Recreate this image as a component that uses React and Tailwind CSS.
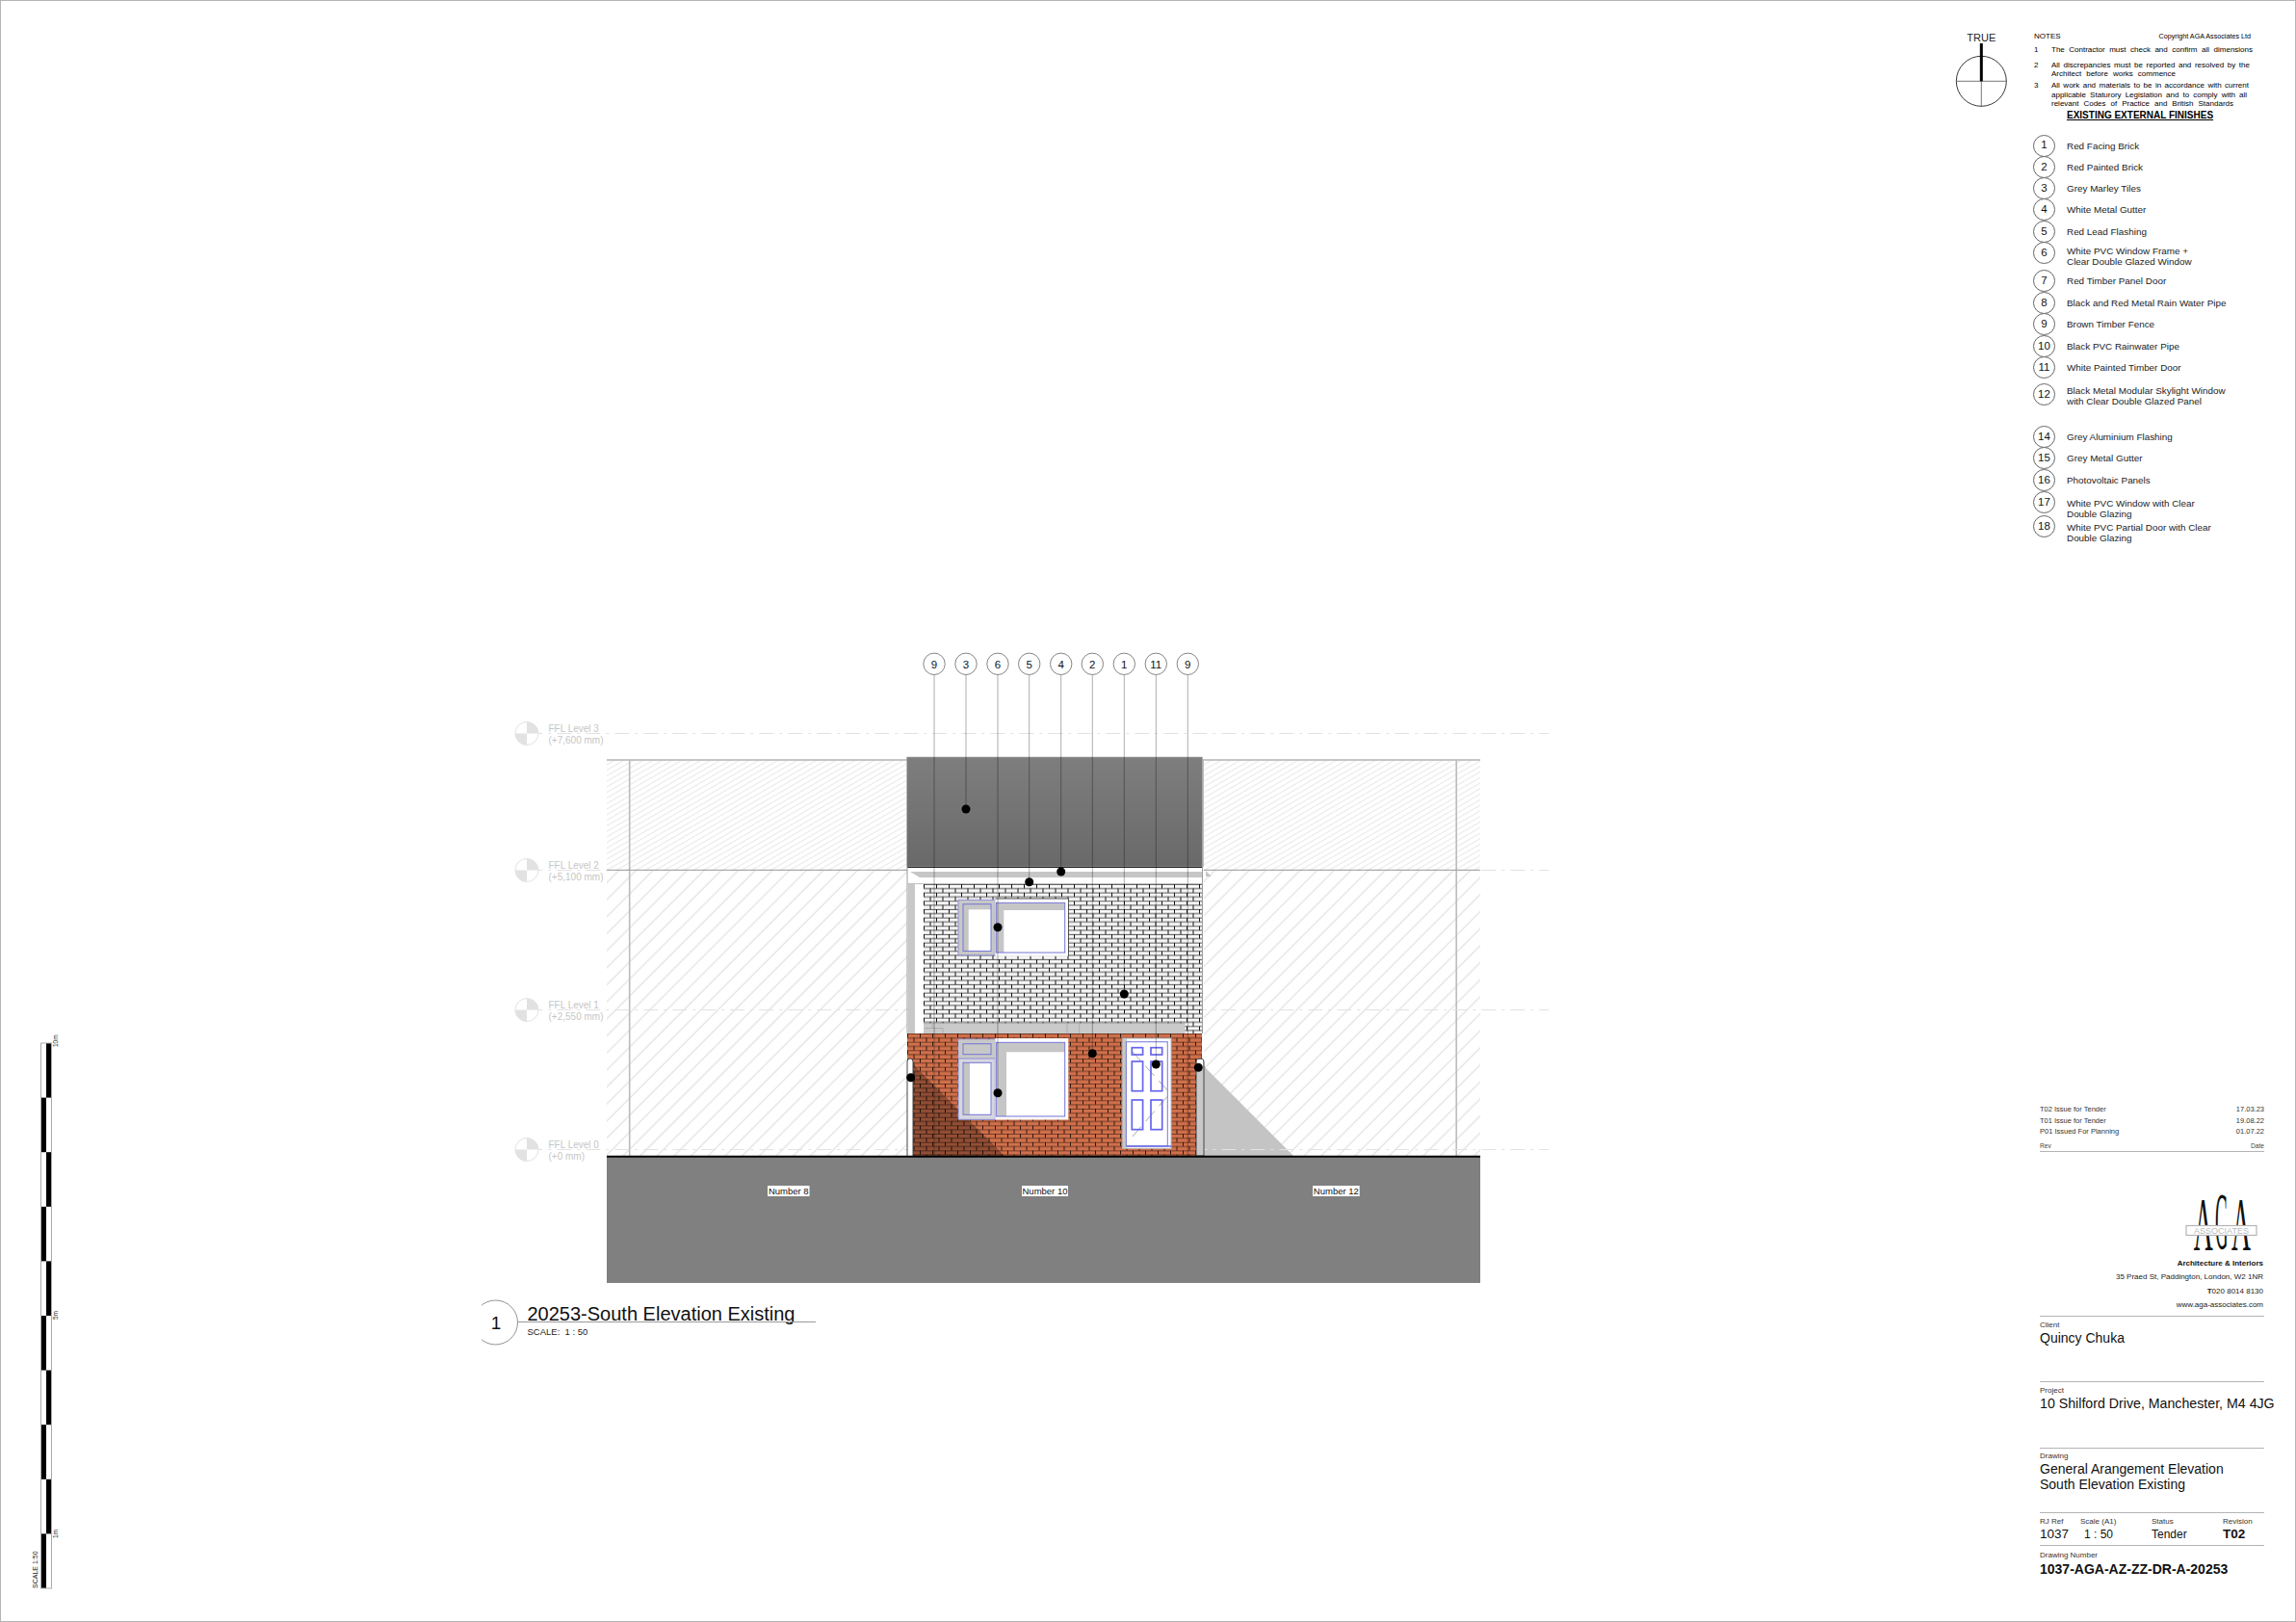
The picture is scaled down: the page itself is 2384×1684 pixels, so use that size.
const FONT = "font-['Liberation_Sans',Arial,sans-serif]"

// Finishes key, gap is the distance from the previous row, nudge lines two-line labels up with the reference
const finishes = [
  { no: '1', gap: 'mt-0', lines: ['Red Facing Brick'] },
  { no: '2', gap: 'mt-[0.3px]', lines: ['Red Painted Brick'] },
  { no: '3', gap: 'mt-[0.5px]', lines: ['Grey Marley Tiles'] },
  { no: '4', gap: 'mt-0', lines: ['White Metal Gutter'] },
  { no: '5', gap: 'mt-[1px]', lines: ['Red Lead Flashing'] },
  { no: '6', gap: 'mt-0', nudge: 'translate-y-[3px]', lines: ['White PVC Window Frame +', 'Clear Double Glazed Window'] },
  { no: '7', gap: 'mt-[7px]', lines: ['Red Timber Panel Door'] },
  { no: '8', gap: 'mt-[0.5px]', lines: ['Black and Red Metal Rain Water Pipe'] },
  { no: '9', gap: 'mt-[0.5px]', lines: ['Brown Timber Fence'] },
  { no: '10', gap: 'mt-[0.5px]', lines: ['Black PVC Rainwater Pipe'] },
  { no: '11', gap: 'mt-0', lines: ['White Painted Timber Door'] },
  { no: '12', gap: 'mt-[6px]', nudge: 'translate-y-[2px]', lines: ['Black Metal Modular Skylight Window', 'with Clear Double Glazed Panel'] },
  { no: '14', gap: 'mt-[22px]', lines: ['Grey Aluminium Flashing'] },
  { no: '15', gap: 'mt-[0.7px]', lines: ['Grey Metal Gutter'] },
  { no: '16', gap: 'mt-[0.3px]', lines: ['Photovoltaic Panels'] },
  { no: '17', gap: 'mt-[1.7px]', nudge: 'translate-y-[5.5px]', lines: ['White PVC Window with Clear', 'Double Glazing'] },
  { no: '18', gap: 'mt-[3px]', nudge: 'translate-y-[5.5px]', lines: ['White PVC Partial Door with Clear', 'Double Glazing'] },
]

const callouts = [
  { x: 970, label: '9', to: 1200, dots: [] },
  { x: 1003, label: '3', to: 840, dots: [840] },
  { x: 1036, label: '6', to: 1135, dots: [962.7, 1134.7] },
  { x: 1068.7, label: '5', to: 916, dots: [915.7] },
  { x: 1101.7, label: '4', to: 905, dots: [905] },
  { x: 1134.3, label: '2', to: 1094, dots: [1093.7] },
  { x: 1167.3, label: '1', to: 1032, dots: [1032] },
  { x: 1200.3, label: '11', to: 1105, dots: [1105] },
  { x: 1233.3, label: '9', to: 1200, dots: [] },
]

const levels = [
  { y: 761.5, name: 'FFL Level 3', height: '(+7,600 mm)' },
  { y: 903.5, name: 'FFL Level 2', height: '(+5,100 mm)' },
  { y: 1048.5, name: 'FFL Level 1', height: '(+2,550 mm)' },
  { y: 1193.5, name: 'FFL Level 0', height: '(+0 mm)' },
]

const doorPanels = [
  [1175.3, 1087.7, 11.3, 7.3], [1195, 1087.7, 11.7, 7.3],
  [1175.3, 1102, 11.3, 30.7], [1195, 1102, 11.7, 30.7],
  [1175.3, 1142, 11.3, 30.7], [1195, 1142, 11.7, 30.7],
]

function LevelMark({ y, name, height }) {
  return (
    <g>
      <circle cx="547" cy={y} r="12" fill="#fff" stroke="#e2e2e2" />
      <path d={`M547 ${y}V${y - 12}A12 12 0 0 1 559 ${y}Z`} fill="#e2e2e2" />
      <path d={`M547 ${y}V${y + 12}A12 12 0 0 1 535 ${y}Z`} fill="#e2e2e2" />
      <text x="569.5" y={y - 2} fontSize="10" fill="#c6c6c6">{name}</text>
      <text x="569.5" y={y + 10} fontSize="10" fill="#c6c6c6">{height}</text>
    </g>
  )
}

function Glazing({ x, y, w, h, sx = 0, sy = 0 }) {
  // blue pane outline, with the grey reveal shadow on the left and top
  return (
    <g>
      <rect x={x} y={y} width={w} height={h} fill="#c6c6c6" />
      <rect x={x + sx} y={y + sy} width={w - sx} height={h - sy} fill="#fff" />
      <rect x={x} y={y} width={w} height={h} fill="none" stroke="#7474d6" />
    </g>
  )
}

function Elevation() {
  return (
    <svg className="mt-[659px] shrink-0" width="1220" height="760" viewBox="500 660 1220 760" fontFamily="'Liberation Sans', Arial, sans-serif">
      <defs>
        <pattern id="hatchTight" width="10" height="5" patternUnits="userSpaceOnUse" patternTransform="rotate(-30)">
          <line x1="0" y1="2.5" x2="10" y2="2.5" stroke="#e8e8e8" />
        </pattern>
        <pattern id="hatchWide" width="10" height="12.5" patternUnits="userSpaceOnUse" patternTransform="rotate(-45)">
          <line x1="0" y1="6" x2="10" y2="6" stroke="#e0e0e0" strokeWidth="1.2" />
        </pattern>
        <pattern id="brickWhite" x="959" y="918" width="13" height="8.67" patternUnits="userSpaceOnUse">
          <rect width="13" height="8.67" fill="#fff" />
          <rect y="3.1" width="13" height="1.2" fill="#dcdcdc" />
          <rect y="7.4" width="13" height="1.2" fill="#dcdcdc" />
          <path d="M0 .4H13M0 4.7H13" stroke="#2c2c2c" strokeWidth=".8" />
          <path d="M.5 0V4.4M7 4.4V8.67" stroke="#111" />
        </pattern>
        <pattern id="brickRed" x="942" y="1073" width="13" height="8.67" patternUnits="userSpaceOnUse">
          <rect width="13" height="8.67" fill="#d0704b" />
          <path d="M0 .4H13M0 4.7H13" stroke="#53291c" strokeWidth=".8" />
          <path d="M.5 0V4.4M7 4.4V8.67" stroke="#2d1710" />
        </pattern>
        <linearGradient id="roofShade" x1="0" y1="0" x2="0" y2="1">
          <stop offset="0" stopColor="#7e7e7e" />
          <stop offset="1" stopColor="#696969" />
        </linearGradient>
      </defs>

      {/* neighbouring plots */}
      <rect x="630" y="789" width="312" height="114" fill="url(#hatchTight)" />
      <rect x="1250" y="789" width="287" height="114" fill="url(#hatchTight)" />
      <rect x="630" y="903" width="312" height="297" fill="url(#hatchWide)" />
      <rect x="1250" y="903" width="287" height="297" fill="url(#hatchWide)" />
      <path d="M630 789H942M1250 789H1537" stroke="#b4b4b4" strokeWidth="1.5" />
      <path d="M653.7 789V1200M1512.2 789V1200" stroke="#bcbcbc" strokeWidth="1.6" />
      <path d="M1250 1106L1253 1110L1343 1200H1250Z" fill="#c4c4c4" />

      {/* level lines */}
      {levels.map(l => (
        <line key={l.name} x1="548.3" y1={l.y} x2="1608" y2={l.y} stroke="#e2e2e2" strokeDasharray="15 6 3 6" />
      ))}
      <path d="M630 903.3H942M1250 903.3H1537" stroke="#999" />
      {levels.map(l => <LevelMark key={l.name} {...l} />)}

      {/* roof and eaves */}
      <rect x="1248" y="788" width="2" height="112" fill="#bdbdbd" />
      <rect x="941.7" y="786" width="306.6" height="114" fill="url(#roofShade)" stroke="#a8a8a8" strokeWidth=".6" />
      <rect x="942" y="900" width="306" height="18" fill="#fff" />
      <path d="M942 900.5H1248" stroke="#222" />
      <path d="M945 905H1248V910H1258L1252 904V910H1248V911H955Z" fill="#c6c6c6" />
      <path d="M942 900V1073M1248.5 900V1073" stroke="#9c9c9c" />
      <path d="M942 917.5H1248.5" stroke="#c0c0c0" />

      {/* walls */}
      <rect x="943" y="918" width="7" height="155" fill="#c8c8c8" />
      <rect x="950" y="918" width="9" height="155" fill="#fff" />
      <rect x="959" y="918" width="289" height="155" fill="url(#brickWhite)" />
      <rect x="959" y="1062.5" width="271.5" height="10.5" fill="#c9c9c9" />
      <path d="M959 1062.5H1230.5M1108 1062.5V1073M1120.7 1062.5V1073M960 1067.5H979V1073M968 1062.5V1067.5" stroke="#a0a0a0" strokeWidth=".7" fill="none" />
      <rect x="942" y="1073" width="306" height="127" fill="url(#brickRed)" />
      <path d="M948 1105L1043 1200H948Z" fill="#000" fillOpacity=".3" />

      {/* upper windows */}
      <rect x="995" y="934.3" width="38.3" height="57.4" fill="#c8c8c8" stroke="#8f8fd8" />
      <Glazing x={1000} y={938.7} w={29} h={48.7} sx={5.7} sy={5.6} />
      <rect x="1033.3" y="933" width="76" height="59.7" fill="#fff" />
      <path d="M1033.3 933H1109.5V992.7" fill="none" stroke="#333" strokeWidth=".8" />
      <Glazing x={1034.3} y={937.3} w={71.4} h={51.7} sx={8} sy={7.7} />

      {/* lower windows */}
      <rect x="995" y="1079" width="38.3" height="83.3" fill="#d6d6e0" stroke="#8f8fd8" />
      <rect x="995.5" y="1079.5" width="37.3" height="19.5" fill="#c8c8c8" />
      <rect x="1000" y="1083.7" width="29" height="11" fill="#c8c8c8" stroke="#7474d6" />
      <path d="M995 1099H1033.3" stroke="#8f8fd8" />
      <Glazing x={1000} y={1103.3} w={29} h={54} sx={7} />
      <rect x="1033.3" y="1078" width="76" height="84.5" fill="#fff" />
      <Glazing x={1034.3} y={1082.3} w={71.4} h={76.7} sx={10.7} sy={10} />

      {/* door */}
      <rect x="1165.7" y="1078" width="50.3" height="114.3" fill="#fff" stroke="#b8b8b8" />
      <rect x="1166" y="1078" width="4" height="114" fill="#c8c8c8" />
      <rect x="1169.3" y="1081.7" width="43" height="108.3" fill="none" stroke="#7474e0" />
      <path d="M1170 1190H1216" stroke="#6a6ae0" strokeWidth="1.4" />
      <path d="M1175 1091L1215 1135L1175 1181" fill="none" stroke="#a8a8a8" strokeDasharray="14 7" />
      {doorPanels.map(([x, y, w, h]) => (
        <rect key={`${x}-${y}`} x={x} y={y} width={w} height={h} fill="none" stroke="#6666ee" strokeWidth="1.7" />
      ))}

      {/* rain water pipes */}
      <path d="M942 1200V1102Q942 1099 945 1099Q948 1099 948 1102V1200" fill="#fff" stroke="#444" />
      <path d="M1242 1200V1102Q1242 1099 1246 1099Q1250 1099 1250 1102V1200Z" fill="#c8c8c8" stroke="#444" />
      <rect x="1243" y="1100" width="6" height="10" fill="#fff" />

      {/* ground */}
      <rect x="630" y="1201" width="907" height="131" fill="#808080" />
      <path d="M630 1200.8H1537" stroke="#000" strokeWidth="2" />
      {[['Number 8', 797, 43.5], ['Number 10', 1061, 48], ['Number 12', 1363, 48.7]].map(([t, x, w]) => (
        <g key={t}>
          <rect x={x} y="1231" width={w} height="11" fill="#fff" />
          <text x={x + w / 2} y="1240" textAnchor="middle" fontSize="9.5" fill="#111">{t}</text>
        </g>
      ))}

      {/* finish callouts */}
      {callouts.map(c => (
        <g key={c.x}>
          <line x1={c.x} y1="700.6" x2={c.x} y2={c.to} stroke="#000" strokeOpacity=".32" />
          <circle cx={c.x} cy="689.3" r="11.2" fill="#fff" stroke="#666" strokeWidth=".8" />
          <text x={c.x} y="693.6" textAnchor="middle" fontSize="11.5" fill="#111">{c.label}</text>
          {c.dots.map(d => <circle key={d} cx={c.x} cy={d} r="4.5" fill="#000" />)}
        </g>
      ))}
      <circle cx="945.7" cy="1118.7" r="4.5" fill="#000" />
      <circle cx="1244.3" cy="1108.3" r="4.5" fill="#000" />

      {/* view title */}
      <circle cx="514.5" cy="1373" r="23" fill="#fff" stroke="#777" strokeWidth=".8" />
      <text x="515" y="1379.5" textAnchor="middle" fontSize="19" fill="#111">1</text>
      <text x="547.5" y="1370.5" fontSize="20" fill="#111">20253-South Elevation Existing</text>
      <line x1="538" y1="1372.5" x2="847" y2="1372.5" stroke="#999" />
      <text x="547.5" y="1385.5" fontSize="9.5" fill="#222">{'SCALE:\u00a0\u00a01 : 50'}</text>
    </svg>
  )
}

function ScaleBar() {
  const segments = Array.from({ length: 10 }, (_, i) => i)
  return (
    <svg className="mt-[1069px]" width="80" height="600" viewBox="1 1070 80 600" fontFamily="'Liberation Sans', Arial, sans-serif">
      {segments.map(i => (
        <rect key={i} x={i % 2 === 0 ? 42.5 : 48} y={1592.4 - i * 56.6} width="5.5" height="56.6" fill="#000" />
      ))}
      <rect x="42.5" y="1083" width="11" height="566" fill="none" stroke="#aaa" />
      <text transform="translate(60 1087) rotate(-90)" fontSize="6.5" fill="#222">10m</text>
      <text transform="translate(60 1370) rotate(-90)" fontSize="6.5" fill="#222">5m</text>
      <text transform="translate(60 1597) rotate(-90)" fontSize="6.5" fill="#222">1m</text>
      <text transform="translate(39 1649) rotate(-90)" fontSize="7" fill="#222">SCALE 1:50</text>
    </svg>
  )
}

function Compass() {
  return (
    <svg className="shrink-0" width="83" height="112" viewBox="2029 0 83 112" fontFamily="'Liberation Sans', Arial, sans-serif">
      <text x="2057.3" y="42" textAnchor="middle" fontSize="11" fill="#222">TRUE</text>
      <circle cx="2057.3" cy="83.3" r="26" fill="none" stroke="#222" strokeWidth=".9" />
      <path d="M2031 83.3H2083.5M2057.3 83.3V110" stroke="#555" strokeWidth=".8" />
      <rect x="2055.8" y="44" width="3" height="39.3" fill="#000" />
    </svg>
  )
}

function Logo() {
  // tall box so the stretched letters stay inside the svg, pulled back with negative margins
  return (
    <svg className="self-end mt-[19px] -mb-[20px] mr-[7px]" width="75" height="106" viewBox="0 -20 75 106">
      <g fontFamily="'Liberation Serif', serif" fill="#111" textAnchor="middle">
        <text transform="translate(18.7 62) scale(.35 1)" fontSize="79">A</text>
        <text transform="translate(37.8 62) scale(.22 1)" fontSize="85">G</text>
        <text transform="translate(58 62) scale(.35 1)" fontSize="79">A</text>
      </g>
      <rect x="1" y="37.5" width="73" height="10" fill="#fff" stroke="#b5b5b5" strokeWidth="1.2" />
      <text x="37.5" y="45.8" textAnchor="middle" fontSize="9" fontFamily="'Liberation Sans', Arial, sans-serif" fill="#bbb">ASSOCIATES</text>
    </svg>
  )
}

function NoteLine({ width, children }) {
  return <p className={`${width} [text-align-last:justify] leading-[9.5px]`}>{children}</p>
}

export default function App() {
  return (
    <div className={`${FONT} w-[2384px] h-[1684px] flex overflow-hidden bg-white border border-[#b4b4b4] text-[#111]`}>

      {/* Scale bar */}
      <div className="w-[499px] shrink-0">
        <ScaleBar />
      </div>

      {/* Elevation drawing */}
      <Elevation />

      {/* Notes, finishes key and title block */}
      <div className="ml-auto w-[354px] shrink-0 flex flex-col">

        <div className="flex">
          <Compass />
          <div className="flex-1 -mt-[1px] text-black">
            <div className="w-[225px] mt-[33px] flex justify-between text-[8px] leading-[10px]">
              <span>NOTES</span>
              <span className="text-[7.2px]">Copyright AGA Associates Ltd</span>
            </div>

            <div className="mt-[4px] flex text-[8px]">
              <span className="w-[18px] leading-[9.5px]">1</span>
              <NoteLine width="w-[209px]">The Contractor must check and confirm all dimensions</NoteLine>
            </div>
            <div className="mt-[6px] flex text-[8px]">
              <span className="w-[18px] leading-[9.5px]">2</span>
              <div>
                <NoteLine width="w-[206px]">All discrepancies must be reported and resolved by the</NoteLine>
                <NoteLine width="w-[129px]">Architect before works commence</NoteLine>
              </div>
            </div>
            <div className="mt-[2.5px] flex text-[8px]">
              <span className="w-[18px] leading-[9.5px]">3</span>
              <div>
                <NoteLine width="w-[205px]">All work and materials to be in accordance with current</NoteLine>
                <NoteLine width="w-[203px]">applicable Staturory Legislation and to comply with all</NoteLine>
                <NoteLine width="w-[189px]">relevant Codes of Practice and British Standards</NoteLine>
              </div>
            </div>
            <h2 className="mt-[1px] ml-[34px] text-[10px] leading-[12px] font-bold underline whitespace-nowrap">EXISTING EXTERNAL FINISHES</h2>

            <ul className="mt-[14.5px] -ml-[1px]">
              {finishes.map(f => (
                <li key={f.no} className={`${f.gap} h-[22px] flex items-center`}>
                  <span className="w-[23px] h-[23px] shrink-0 rounded-full border border-[#666] bg-white flex items-center justify-center text-[11.5px] text-[#111]">{f.no}</span>
                  <span className={`${f.nudge || ''} ml-[12px] text-[9.9px] leading-[11px] text-[#222] whitespace-nowrap`}>
                    {f.lines.map(line => <span key={line} className="block">{line}</span>)}
                  </span>
                </li>
              ))}
            </ul>
          </div>
        </div>

        {/* Title block */}
        <div className="mt-auto mb-[46px] ml-[89px] w-[233px] flex flex-col">
          <div className="text-[7.5px] leading-[11.2px] text-[#333]">
            <div className="flex justify-between"><span>T02 Issue for Tender</span><span>17.03.23</span></div>
            <div className="flex justify-between"><span>T01 Issue for Tender</span><span>19.08.22</span></div>
            <div className="flex justify-between"><span>P01 Issued For Planning</span><span>01.07.22</span></div>
          </div>
          <div className="mt-[5px] pb-[1px] flex justify-between text-[6.6px] leading-[9px] text-[#444] border-b border-[#b4b4b4]">
            <span>Rev</span><span>Date</span>
          </div>

          <div className="h-[170px] flex flex-col">
            <Logo />
            <div className="mt-[4px] text-right text-[8px] leading-[14.3px] text-[#222] pr-[1px] whitespace-nowrap">
              <p className="font-bold text-[#111]">Architecture &amp; Interiors</p>
              <p>35 Praed St, Paddington, London, W2 1NR</p>
              <p><b>T</b>020 8014 8130</p>
              <p>www.aga-associates.com</p>
            </div>
          </div>

          <div className="h-[68px] pt-[4px] border-t border-[#b4b4b4]">
            <p className="text-[8px] leading-[10px] text-[#333]">Client</p>
            <p className="text-[14px] leading-[16px] whitespace-nowrap">Quincy Chuka</p>
          </div>
          <div className="h-[69px] pt-[4px] border-t border-[#b4b4b4]">
            <p className="text-[8px] leading-[10px] text-[#333]">Project</p>
            <p className="text-[14.2px] leading-[16px] whitespace-nowrap">10 Shilford Drive, Manchester, M4 4JG</p>
          </div>
          <div className="h-[67px] pt-[3px] border-t border-[#b4b4b4]">
            <p className="text-[8px] leading-[10px] text-[#333]">Drawing</p>
            <p className="text-[14px] leading-[16px]">General Arangement Elevation</p>
            <p className="text-[14px] leading-[16px]">South Elevation Existing</p>
          </div>
          <div className="h-[34px] pt-[4px] border-t border-[#b4b4b4] grid grid-cols-[42px_74px_74px_43px]">
            <div>
              <p className="text-[8px] leading-[10px] text-[#333]">RJ Ref</p>
              <p className="text-[13.5px] leading-[16px]">1037</p>
            </div>
            <div>
              <p className="text-[8px] leading-[10px] text-[#333]">Scale (A1)</p>
              <p className="ml-[4px] text-[12px] leading-[16px]">1 : 50</p>
            </div>
            <div>
              <p className="text-[8px] leading-[10px] text-[#333]">Status</p>
              <p className="text-[12px] leading-[16px]">Tender</p>
            </div>
            <div>
              <p className="text-[8px] leading-[10px] text-[#333]">Revision</p>
              <p className="text-[13.5px] leading-[16px] font-bold">T02</p>
            </div>
          </div>
          <div className="pt-[5px] border-t border-[#b4b4b4]">
            <p className="text-[8px] leading-[10px] text-[#333]">Drawing Number</p>
            <p className="mt-[1px] text-[14px] leading-[16px] font-bold whitespace-nowrap">1037-AGA-AZ-ZZ-DR-A-20253</p>
          </div>
        </div>

      </div>
    </div>
  )
}
